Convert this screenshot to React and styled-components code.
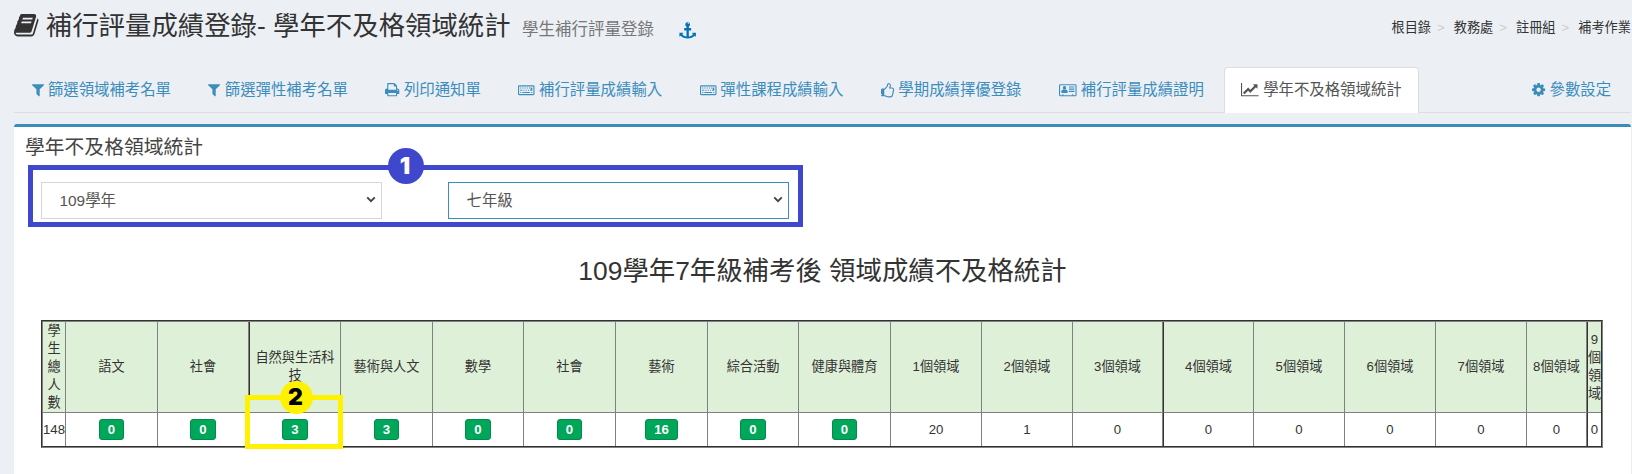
import React from "react";
import styled, { createGlobalStyle, css } from "styled-components";

const GlobalStyle = createGlobalStyle`
  *, *::before, *::after { box-sizing: border-box; }
  body {
    margin: 0;
    background: #ecf0f5;
    color: #333;
    font-family: "Liberation Sans", "Noto Sans CJK TC", sans-serif;
    font-size: 15.4px;
    line-height: 22px;
    overflow: hidden;
  }
`;

/* ---------- icons ---------- */

const Glyph = styled.svg`
  height: 1em;
  width: ${(p) => p.$w / 1792}em;
  vertical-align: -0.143em;
  fill: currentColor;
  overflow: visible;
`;

const ICONS = {
  book: {
    x: 64,
    w: 1664,
    d: "M1703 478q40 57 18 129l-275 906q-19 64-76.5 107.5t-122.5 43.5h-923q-77 0-148.5-53.5t-99.5-131.5q-24-67-2-127 0-4 3-27t4-37q1-8-3-21.5t-3-19.5q2-11 8-21t16.5-23.5 16.5-23.5q23-38 45-91.5t30-91.5q3-10 .5-30t-.5-28q3-11 17-28t17-23q21-36 42-92t25-90q1-9-2.5-32t.5-28q4-13 22-30.5t22-22.5q19-26 42.5-84.5t27.5-96.5q1-8-3-25.5t-2-26.5q2-8 9-18t18-23 17-21q8-12 16.5-30.5t15-35 16-36 19.5-32 26.5-23.5 36-11.5 47.5 5.5l-1 3q38-9 51-9h761q74 0 114 56t18 130l-274 906q-36 119-71.5 153.5t-128.5 34.5h-869q-27 0-38 15-11 16-1 43 24 70 144 70h923q29 0 56-15.5t35-41.5l300-987q7-22 5-57 38 15 59 43zm-1064 2q-4 13 2 22.5t20 9.5h608q13 0 25.5-9.5t16.5-22.5l21-64q4-13-2-22.5t-20-9.5h-608q-13 0-25.5 9.5t-16.5 22.5zm-83 256q-4 13 2 22.5t20 9.5h608q13 0 25.5-9.5t16.5-22.5l21-64q4-13-2-22.5t-20-9.5h-608q-13 0-25.5 9.5t-16.5 22.5z",
  },
  anchor: {
    x: 0,
    w: 1792,
    d: "M960 256q0-26-19-45t-45-19-45 19-19 45 19 45 45 19 45-19 19-45zm768 1056v352q0 22-20 30-8 2-12 2-12 0-23-9l-93-93q-119 143-318.5 226.5t-429.5 83.5-429.5-83.5-318.5-226.5l-93 93q-9 9-23 9-4 0-12-2-20-8-20-30v-352q0-14 9-23t23-9h352q22 0 30 20 8 19-7 35l-100 100q67 91 189.5 153.5t271.5 82.5v-647h-192q-26 0-45-19t-19-45v-128q0-26 19-45t45-19h192v-163q-58-34-93-92.5t-35-128.5q0-106 75-181t181-75 181 75 75 181q0 70-35 128.5t-93 92.5v163h192q26 0 45 19t19 45v128q0 26-19 45t-45 19h-192v647q149-20 271.5-82.5t189.5-153.5l-100-100q-15-16-7-35 8-20 30-20h352q14 0 23 9t9 23z",
  },
  filter: {
    x: 192,
    w: 1408,
    d: "M1595 295q17 41-14 70l-493 493v742q0 42-39 59-13 5-25 5-27 0-45-19l-256-256q-19-19-19-45v-486l-493-493q-31-29-14-70 17-39 59-39h1280q42 0 59 39z",
  },
  print: {
    x: 64,
    w: 1664,
    d: "M448 1536h896v-256h-896v256zm0-640h896v-384h-160q-40 0-68-28t-28-68v-160h-640v640zm1152 64q0-26-19-45t-45-19-45 19-19 45 19 45 45 19 45-19 19-45zm128 0v416q0 13-9.5 22.5t-22.5 9.5h-224v160q0 40-28 68t-68 28h-960q-40 0-68-28t-28-68v-160h-224q-13 0-22.5-9.5t-9.5-22.5v-416q0-79 56.5-135.5t135.5-56.5h64v-544q0-40 28-68t68-28h672q40 0 88 20t76 48l152 152q28 28 48 76t20 88v256h64q79 0 135.5 56.5t56.5 135.5z",
  },
  keyboard: {
    x: 0,
    w: 1920,
    d: "M128 384H1792q128 0 128 128v896q0 128-128 128H128q-128 0-128-128V512q0-128 128-128zm0 128v896H1792V512zM256 1152h128v128H256zM512 1152h896v128H512zM1536 1152h128v128h-128zM256 896h256v128H256zM640 896h128v128H640zM896 896h128v128H896zM1152 896h128v128h-128zM1408 896h64V640h192v384h-256zM256 640h128v128H256zM512 640h128v128H512zM768 640h128v128H768zM1024 640h128v128h-128zM1280 640h128v128h-128z",
  },
  thumb: {
    x: 128,
    w: 1536,
    d: "M256 1472q0-26-19-45t-45-19q-27 0-45.5 19t-18.5 45q0 27 18.5 45.5t45.5 18.5q26 0 45-18.5t19-45.5zm1280-576q0-51-39-89.5t-89-38.5h-352q0-58 48-159.5t48-160.5q0-98-32-145t-128-47q-26 26-38 85t-30.5 125.5-59.5 109.5q-22 23-77 91-4 5-23 30t-31.5 41-34.5 42.5-40 44-38.5 35.5-40 27-35.5 9h-32v640h32q13 0 31.5 3t33 6.5 38 11 35 11.5 35.5 12.5 29 10.5q211 73 342 73h121q192 0 192-167 0-26-5-56 30-16 47.5-52.5t17.5-73.5-18-69q53-50 53-119 0-25-10-55.5t-25-47.5q32-1 53.5-47t21.5-81zm128-1q0 89-49 163 9 33 9 69 0 77-38 144 3 21 3 43 0 101-60 178 1 139-85 219.5t-227 80.5h-129q-96 0-189.5-22.5t-216.5-65.5q-116-40-138-40h-288q-53 0-90.5-37.5t-37.5-90.5v-640q0-53 37.5-90.5t90.5-37.5h274q36-24 137-155 58-75 107-128 24-25 35.5-85.5t30.5-126.5 62-108q39-37 90-37 84 0 151 32.5t102 101.5 35 186q0 93-48 192h176q104 0 180 76t76 179z",
  },
  card: {
    x: 0,
    w: 2048,
    d: "M160 256H1888q160 0 160 160V1504q0 160-160 160H160Q0 1664 0 1504V416Q0 256 160 256zm0 128q-32 0-32 32V1504q0 32 32 32H384v-96h128v96h1024v-96h128v96h224q32 0 32-32V416q0-32-32-32zM640 480a200 210 0 0 1 0 420a200 210 0 0 1 0-420zM490 860q70 70 150 70t150-70q234 20 234 280 0 140-110 140H366q-110 0-110-140 0-260 234-280zM1152 1024h640v128h-640zM1152 768h640v128h-640zM1152 512h640v128h-640z",
  },
  chart: {
    x: 0,
    w: 2048,
    d: "M2048 1536v128h-2048v-1536h128v1408h1920zm-128-1248v435q0 21-19.5 29.5t-35.5-7.5l-121-121-633 633q-10 10-23 10t-23-10l-233-233-416 416-192-192 585-585q10-10 23-10t23 10l233 233 464-464-121-121q-16-16-7.5-35.5t29.5-19.5h435q14 0 23 9t9 23z",
  },
  cog: {
    x: 128,
    w: 1536,
    d: "M1152 896q0-106-75-181t-181-75-181 75-75 181 75 181 181 75 181-75 75-181zm512-109v222q0 12-8 23t-20 13l-185 28q-19 54-39 91 35 50 107 138 10 12 10 25t-9 23q-27 37-99 108t-94 71q-12 0-26-9l-138-108q-44 23-91 38-16 136-29 186-7 28-36 28h-222q-14 0-24.5-8.5t-11.5-21.5l-28-184q-49-16-90-37l-141 107q-10 9-25 9-14 0-25-11-126-114-165-168-7-10-7-23 0-12 8-23 15-21 51-66.5t54-70.5q-27-50-41-99l-183-27q-13-2-21-12.5t-8-23.5v-222q0-12 8-23t19-13l186-28q14-46 39-92-40-57-107-138-10-12-10-24 0-10 9-23 26-36 98.5-107.5t94.5-71.5q13 0 26 10l138 107q44-23 91-38 16-136 29-186 7-28 36-28h222q14 0 24.5 8.5t11.5 21.5l28 184q49 16 90 37l142-107q9-9 24-9 13 0 25 10 129 119 165 170 7 8 7 22 0 12-8 23-15 21-51 66.5t-54 70.5q26 50 41 98l183 28q13 2 21 12.5t8 23.5z",
  },
};

function Icon({ name }) {
  const { x, w, d } = ICONS[name];
  return (
    <Glyph $w={w} viewBox={`${x} 0 ${w} 1792`} aria-hidden="true">
      <path d={d} fillRule={name === "keyboard" || name === "card" ? "evenodd" : "nonzero"} />
    </Glyph>
  );
}

/* ---------- page header ---------- */

const Page = styled.div`
  height: 474px;
  padding: 0 1px 0 14px;
  overflow: hidden;
`;

const PageHeader = styled.header`
  display: flex;
  justify-content: space-between;
  height: 67px;
  white-space: nowrap;
`;

const Title = styled.h1`
  margin: 0;
  padding-top: 12px;
  font-size: 26.4px;
  line-height: 29px;
  font-weight: 400;
`;

const Subtitle = styled.small`
  margin-left: 4px;
  font-size: 16.5px;
  color: #777;
`;

const AnchorLink = styled.a`
  margin-left: 19px;
  font-size: 16.5px;
  color: #0073b7;
`;

const Breadcrumb = styled.ol`
  display: flex;
  margin: 0;
  padding: 18px 0 0;
  list-style: none;
  font-size: 13.2px;
  line-height: 20px;
  color: #333;
`;

const Crumb = styled.li`
  & + &::before {
    content: ">";
    padding: 0 9px 0 5px;
    color: #ccc;
  }
  & + & {
    padding-left: 1px;
  }
`;

/* ---------- tabs ---------- */

const Tabs = styled.nav`
  display: flex;
  height: 46px;
  border-bottom: 1px solid #ddd;
`;

const Tab = styled.a`
  height: 46px;
  margin-right: 2.4px;
  padding: 11px 16.5px 0;
  border: 1px solid transparent;
  border-bottom-width: 0;
  border-radius: 4px 4px 0 0;
  color: #3c8dbc;
  white-space: nowrap;
  ${(p) =>
    p.$active &&
    css`
      background: #fff;
      border-color: #ddd;
      color: #555;
    `}
  ${(p) =>
    p.$end &&
    css`
      margin-left: auto;
    `}
`;

/* ---------- panel ---------- */

const Panel = styled.main`
  height: 400px;
  margin-top: 11px;
  padding: 10px 11px 0;
  border-top: 3px solid #3c8dbc;
  border-radius: 3px;
  background: #fff;
  box-shadow: 0 1px 1px rgba(0, 0, 0, 0.1);
`;

const PanelTitle = styled.h3`
  margin: 0;
  font-size: 19.8px;
  line-height: 20px;
  font-weight: 400;
  color: #444;
`;

const FilterRow = styled.div`
  position: relative;
  display: flex;
  gap: 66px;
  margin: 8px 0 0 3px;
  padding: 17px 13px 8px;
  width: 775px;
  height: 62px;
`;

const SelectBox = styled.label`
  position: relative;
  width: 341px;
  height: 37px;
`;

const Select = styled.select`
  appearance: none;
  width: 100%;
  height: 100%;
  padding: 0 18px 0 17.5px;
  border: 1px solid ${(p) => (p.$focused ? "#3c8dbc" : "#d2d6de")};
  border-radius: 0;
  background: #fff;
  color: #555;
  font: inherit;
`;

const Chevron = styled.svg`
  position: absolute;
  top: 14px;
  right: 6px;
  width: 10px;
  height: 7px;
  fill: none;
  stroke: #444;
  stroke-width: 2.2;
  pointer-events: none;
`;

const Highlight = styled.div`
  position: absolute;
  inset: ${(p) => p.$inset};
  border: 5px solid ${(p) => p.$color};
  pointer-events: none;
`;

const Marker = styled.span`
  position: absolute;
  left: ${(p) => p.$left}px;
  top: ${(p) => p.$top}px;
  display: flex;
  align-items: center;
  justify-content: center;
  width: ${(p) => p.$size}px;
  height: ${(p) => p.$size}px;
  padding-right: 2px;
  border-radius: 50%;
  background: ${(p) => p.$color};
  color: ${(p) => p.$ink};
  font: 900 23px/1 Inter, sans-serif;
`;

const ReportTitle = styled.h2`
  margin: 30px 0 0;
  text-align: center;
  font-size: 26.4px;
  line-height: 29px;
  font-weight: 400;
`;

/* ---------- table ---------- */

const TableFrame = styled.div`
  width: 1562px;
  margin: 34px 0 0 16px;
  border: 1px solid;
  border-color: #333 #808080 #808080 #333;
`;

const Table = styled.table`
  width: 1560px;
  table-layout: fixed;
  border: 1px solid;
  border-color: #808080 #333 #333 #808080;
  border-collapse: separate;
  border-spacing: 0;
  font-size: 13.2px;
  line-height: 18px;
  text-align: center;
`;

const Cell = styled.td`
  position: relative;
  height: 33px;
  padding: 0;
  font-weight: 400;
  vertical-align: middle;
  border-right: ${(p) => (p.$last ? "0" : "1px solid #808080")};
  border-left: ${(p) => (p.$strong ? "1px solid #333" : "0")};
`;

const HeadCell = styled(Cell)`
  height: 91px;
  padding: 0 ${(p) => p.$pad || 0}px;
  border-bottom: 1px solid #808080;
  background: #dff0d8;
  word-break: break-all;
`;

const Count = styled.button`
  display: block;
  height: 21px;
  margin: 0 auto;
  padding: 0 8px;
  border: 1px solid #008d4c;
  border-radius: 3px;
  background: #00a65a;
  color: #fff;
  font: inherit;
  font-weight: 700;
  line-height: 19px;
`;

const TABS = [
  ["filter", "篩選領域補考名單"],
  ["filter", "篩選彈性補考名單"],
  ["print", "列印通知單"],
  ["keyboard", "補行評量成績輸入"],
  ["keyboard", "彈性課程成績輸入"],
  ["thumb", "學期成績擇優登錄"],
  ["card", "補行評量成績證明"],
  ["chart", "學年不及格領域統計"],
  ["cog", "參數設定"],
];

const COLUMNS = [
  { label: "學生總人數", value: 148, width: 23, pad: 4 },
  { label: "語文", value: 0, width: 92, link: true },
  { label: "社會", value: 0, width: 91, link: true },
  { label: "自然與生活科技", value: 3, width: 92, link: true, strong: true, pad: 5, marked: true },
  { label: "藝術與人文", value: 3, width: 92, link: true },
  { label: "數學", value: 0, width: 91, link: true },
  { label: "社會", value: 0, width: 92, link: true },
  { label: "藝術", value: 16, width: 92, link: true },
  { label: "綜合活動", value: 0, width: 91, link: true },
  { label: "健康與體育", value: 0, width: 92, link: true },
  { label: "1個領域", value: 20, width: 91 },
  { label: "2個領域", value: 1, width: 91 },
  { label: "3個領域", value: 0, width: 90 },
  { label: "4個領域", value: 0, width: 91, strong: true },
  { label: "5個領域", value: 0, width: 91 },
  { label: "6個領域", value: 0, width: 91 },
  { label: "7個領域", value: 0, width: 91 },
  { label: "8個領域", value: 0, width: 60 },
  { label: "9個領域", value: 0, width: 14, strong: true },
];

export default function App() {
  const last = COLUMNS.length - 1;
  return (
    <Page>
      <GlobalStyle />
      <PageHeader>
        <Title>
          <Icon name="book" /> 補行評量成績登錄- 學年不及格領域統計{" "}
          <Subtitle>學生補行評量登錄</Subtitle>{" "}
          <AnchorLink>
            <Icon name="anchor" />
          </AnchorLink>
        </Title>
        <Breadcrumb>
          {["根目錄", "教務處", "註冊組", "補考作業"].map((c) => (
            <Crumb key={c}>{c}</Crumb>
          ))}
        </Breadcrumb>
      </PageHeader>

      <Tabs>
        {TABS.map(([icon, label]) => (
          <Tab key={label} $active={icon === "chart"} $end={icon === "cog"}>
            <Icon name={icon} /> {label}
          </Tab>
        ))}
      </Tabs>

      <Panel>
        <PanelTitle>學年不及格領域統計</PanelTitle>
        <FilterRow>
          <SelectBox>
            <Select defaultValue="109">
              <option value="109">109學年</option>
            </Select>
            <Chevron viewBox="0 0 11 8">
              <path d="M1.2 1.5 5.5 5.8 9.8 1.5" />
            </Chevron>
          </SelectBox>
          <SelectBox>
            <Select defaultValue="7" $focused>
              <option value="7">七年級</option>
            </Select>
            <Chevron viewBox="0 0 11 8">
              <path d="M1.2 1.5 5.5 5.8 9.8 1.5" />
            </Chevron>
          </SelectBox>
          <Highlight $inset="0" $color="#3f48cc" />
          <Marker $left={360} $top={-17} $size={36} $color="#3f48cc" $ink="#fff">
            1
          </Marker>
        </FilterRow>

        <ReportTitle>109學年7年級補考後 領域成績不及格統計</ReportTitle>

        <TableFrame>
          <Table>
            <colgroup>
              {COLUMNS.map((c, i) => (
                <col key={i} style={{ width: c.width }} />
              ))}
            </colgroup>
            <thead>
              <tr>
                {COLUMNS.map((c, i) => (
                  <HeadCell as="th" key={i} $strong={c.strong} $last={i === last} $pad={c.pad}>
                    {c.label}
                  </HeadCell>
                ))}
              </tr>
            </thead>
            <tbody>
              <tr>
                {COLUMNS.map((c, i) => (
                  <Cell key={i} $strong={c.strong} $last={i === last}>
                    {c.link ? <Count>{c.value}</Count> : c.value}
                    {c.marked && (
                      <>
                        <Highlight $inset="-18px -3px -3px -5px" $color="#fff200" />
                        <Marker $left={30} $top={-32} $size={33} $color="#fff200" $ink="#000">
                          2
                        </Marker>
                      </>
                    )}
                  </Cell>
                ))}
              </tr>
            </tbody>
          </Table>
        </TableFrame>
      </Panel>
    </Page>
  );
}
